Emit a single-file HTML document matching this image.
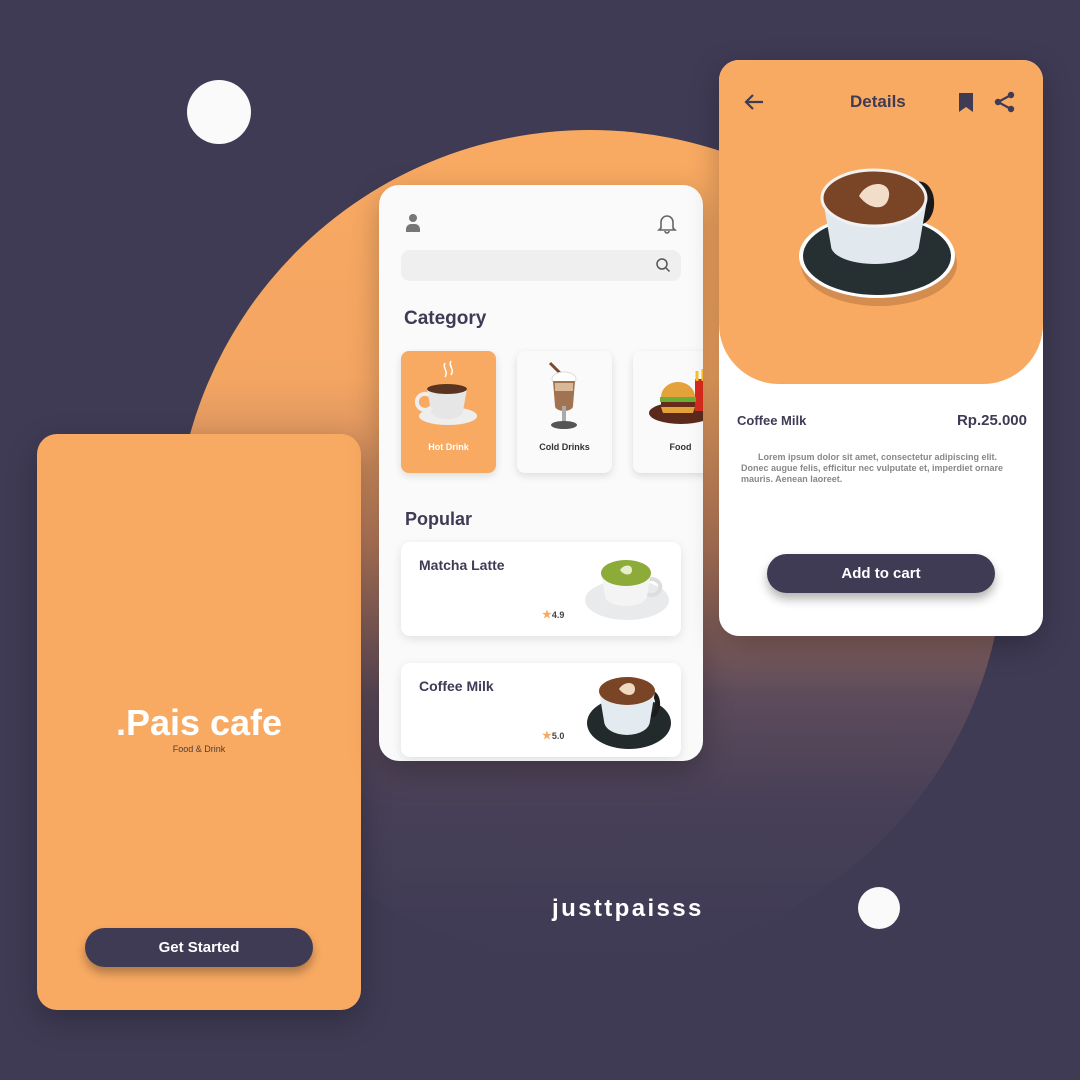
<!DOCTYPE html>
<html><head><meta charset="utf-8"><style>
*{margin:0;padding:0;box-sizing:border-box}
body{width:1080px;height:1080px;background:#3f3b55;position:relative;overflow:hidden;font-family:"Liberation Sans",sans-serif}
.abs{position:absolute}
.circ{left:175px;top:130px;width:830px;height:830px;border-radius:50%;background:linear-gradient(180deg,#f9aa62 0%,#f3a562 30%,#b67a5c 50%,#5d4b5b 68%,#463f57 82%,rgba(63,59,85,0) 100%)}
.card{border-radius:20px;box-shadow:0 10px 30px rgba(0,0,0,.25)}
.dark{color:#3f3b55}
.btn{background:#3f3b55;color:#fff;border-radius:20px;text-align:center;font-weight:bold;box-shadow:0 6px 10px rgba(0,0,0,.3)}
.cat{width:95px;height:122px;border-radius:8px;box-shadow:0 3px 8px rgba(0,0,0,.12);background:#fafafa;font-size:9px;font-weight:bold;text-align:center}
.pop{left:22px;width:280px;height:94px;background:#fff;border-radius:9px;box-shadow:0 3px 10px rgba(0,0,0,.1)}
</style></head><body>
<div class="abs circ"></div>
<div class="abs" style="left:187px;top:80px;width:64px;height:64px;border-radius:50%;background:#fafafa"></div>
<div class="abs" style="left:858px;top:887px;width:42px;height:42px;border-radius:50%;background:#fafafa"></div>
<div class="abs" style="left:552px;top:895px;color:#fff;font-weight:bold;font-size:24px;letter-spacing:2.4px">justtpaisss</div>

<!-- splash -->
<div class="abs card" style="left:37px;top:434px;width:324px;height:576px;background:#f9aa62">
 <div class="abs" style="left:0;width:324px;top:268px;text-align:center;color:#fff;font-weight:bold;font-size:36px">.Pais cafe</div>
 <div class="abs" style="left:0;width:324px;top:310px;text-align:center;color:#4a3d3a;font-size:9px">Food &amp; Drink</div>
 <div class="abs btn" style="left:48px;top:494px;width:228px;height:39px;line-height:39px;font-size:15px">Get Started</div>
</div>

<!-- home -->
<div class="abs card" style="left:379px;top:185px;width:324px;height:576px;background:#fafafa;overflow:hidden">
 <svg class="abs" style="left:25px;top:28px" width="18" height="20" viewBox="0 0 18 20"><circle cx="9" cy="5" r="4" fill="#777"/><path d="M2 19v-3a5 5 0 0 1 5-5h4a5 5 0 0 1 5 5v3z" fill="#777"/></svg>
 <svg class="abs" style="left:277px;top:27px" width="22" height="22" viewBox="0 0 22 22" fill="none" stroke="#666" stroke-width="1.6"><path d="M5 16V10a6 6 0 0 1 12 0v6l2 2H3z"/><path d="M9 19a2 2 0 0 0 4 0"/></svg>
 <div class="abs" style="left:22px;top:65px;width:280px;height:31px;background:#efefef;border-radius:9px"></div>
 <svg class="abs" style="left:276px;top:72px" width="16" height="16" viewBox="0 0 16 16" fill="none" stroke="#555" stroke-width="1.5"><circle cx="7" cy="7" r="5"/><path d="M11 11l3.5 3.5"/></svg>
 <div class="abs dark" style="left:25px;top:123px;font-size:19px;font-weight:bold">Category</div>
 <div class="abs cat" style="left:22px;top:166px;background:#f9aa62;color:#fff">
  <svg width="95" height="85" viewBox="0 0 95 85"><path d="M44 12c-3 5 4 8 0 14M50 10c-3 5 4 8 0 14" stroke="#fff" fill="none" stroke-width="1.5"/><ellipse cx="47" cy="65" rx="29" ry="9" fill="#eee"/><path d="M26 38h40l-4 22a16 8 0 0 1-32 0z" fill="#e6e6e6"/><ellipse cx="46" cy="38" rx="20" ry="5" fill="#5a3420"/><path d="M28 44a8 8 0 1 0 2 12" stroke="#eee" stroke-width="4" fill="none"/></svg>
  <div style="margin-top:4px">Hot Drink</div></div>
 <div class="abs cat" style="left:138px;top:166px;color:#333">
  <svg width="95" height="85" viewBox="0 0 95 85"><path d="M33 12l10 10" stroke="#7a4a2a" stroke-width="3"/><ellipse cx="47" cy="28" rx="12" ry="7" fill="#fff" stroke="#ddd"/><path d="M36 30h22l-2 25a9 5 0 0 1-18 0z" fill="#a27350"/><path d="M38 32h18v8H38z" fill="#d8b896"/><rect x="45" y="55" width="4" height="17" fill="#aaa"/><ellipse cx="47" cy="74" rx="13" ry="4" fill="#555"/></svg>
  <div style="margin-top:4px">Cold Drinks</div></div>
 <div class="abs cat" style="left:254px;top:166px;color:#333">
  <svg width="95" height="85" viewBox="0 0 95 85"><ellipse cx="48" cy="62" rx="32" ry="11" fill="#5b2a1c"/><rect x="62" y="28" width="22" height="32" fill="#d82a1e"/><path d="M64 20v10M70 18v12M76 21v9" stroke="#f7c22a" stroke-width="3"/><path d="M28 46a17 15 0 0 1 34 0z" fill="#e4a23a"/><rect x="27" y="46" width="36" height="5" fill="#6cad3a"/><rect x="28" y="51" width="34" height="5" fill="#6a2c1a"/><path d="M28 56h34l-2 6H30z" fill="#e4a23a"/></svg>
  <div style="margin-top:4px">Food</div></div>
 <div class="abs dark" style="left:26px;top:324px;font-size:18px;font-weight:bold">Popular</div>
 <div class="abs pop" style="top:357px">
  <div class="abs dark" style="left:18px;top:15px;font-size:14px;font-weight:bold">Matcha Latte</div>
  <div class="abs" style="left:141px;top:66px;font-size:9px;color:#444;font-weight:bold"><span style="color:#f9aa62;font-size:11px">★</span>4.9</div>
  <svg class="abs" style="left:184px;top:8px" width="90" height="78" viewBox="0 0 90 78"><ellipse cx="42" cy="50" rx="42" ry="20" fill="#e8eaec"/><path d="M62 30a9 8 0 1 1 0 14" stroke="#ddd" stroke-width="4" fill="none"/><path d="M16 22h50l-4 24a21 10 0 0 1-42 0z" fill="#f4f4f4"/><ellipse cx="41" cy="23" rx="25" ry="13" fill="#8cab38"/><path d="M35 20c4-6 12-6 12 0s-8 6-12 0" fill="#e9eccf"/></svg>
 </div>
 <div class="abs pop" style="top:478px">
  <div class="abs dark" style="left:18px;top:15px;font-size:14px;font-weight:bold">Coffee Milk</div>
  <div class="abs" style="left:141px;top:66px;font-size:9px;color:#444;font-weight:bold"><span style="color:#f9aa62;font-size:11px">★</span>5.0</div>
  <svg class="abs" style="left:184px;top:8px" width="90" height="80" viewBox="0 0 90 80"><ellipse cx="44" cy="52" rx="42" ry="26" fill="#222a2c"/><path d="M66 22a6 10 0 1 1 0 22" stroke="#1c1c1c" stroke-width="5" fill="none"/><path d="M14 20h56l-5 30a23 14 0 0 1-46 0z" fill="#e4ebf0"/><ellipse cx="42" cy="20" rx="28" ry="14" fill="#7a4526"/><path d="M34 18c5-8 16-8 16 0s-10 8-16 0" fill="#efd9c0"/></svg>
 </div>
</div>

<!-- details -->
<div class="abs card" style="left:719px;top:60px;width:324px;height:576px;background:#fff;overflow:hidden">
 <div class="abs" style="left:0;top:0;width:324px;height:324px;background:#f9aa62;border-radius:0 0 60px 60px"></div>
 <svg class="abs" style="left:24px;top:33px" width="22" height="18" viewBox="0 0 22 18" fill="none" stroke="#3f3b55" stroke-width="2.2"><path d="M20 9H3M10 2L3 9l7 7"/></svg>
 <div class="abs dark" style="left:131px;top:32px;font-size:17px;font-weight:bold">Details</div>
 <svg class="abs" style="left:239px;top:32px" width="16" height="21" viewBox="0 0 16 21"><path d="M1 1h14v19l-7-5-7 5z" fill="#3f3b55"/></svg>
 <svg class="abs" style="left:275px;top:31px" width="22" height="22" viewBox="0 0 22 22"><g fill="#3f3b55"><circle cx="17" cy="4" r="3.2"/><circle cx="4" cy="11" r="3.2"/><circle cx="17" cy="18" r="3.2"/></g><path d="M17 4L4 11l13 7" stroke="#3f3b55" stroke-width="2.2" fill="none"/></svg>
 <svg class="abs" style="left:78px;top:104px" width="166" height="148" viewBox="0 0 166 148"><ellipse cx="82" cy="100" rx="78" ry="42" fill="#b06e3c" opacity=".5"/><ellipse cx="80" cy="92" rx="78" ry="42" fill="#fff"/><ellipse cx="80" cy="92" rx="74" ry="39" fill="#263033"/><path d="M122 22a10 16 0 1 1 0 34" stroke="#1a1a1a" stroke-width="9" fill="none"/><path d="M26 36h104l-8 46a44 18 0 0 1-88 0z" fill="#e2e9ee"/><ellipse cx="77" cy="34" rx="52" ry="28" fill="#7a4526"/><ellipse cx="77" cy="34" rx="52" ry="28" fill="none" stroke="#f1f1f1" stroke-width="3"/><path d="M62 32c8-16 32-16 30 0s-20 14-30 0" fill="#f2dec8"/></svg>
 <div class="abs dark" style="left:18px;top:353px;font-size:13px;font-weight:bold">Coffee Milk</div>
 <div class="abs dark" style="right:16px;top:352px;font-size:15px;font-weight:bold">Rp.25.000</div>
 <div class="abs" style="left:22px;top:392px;width:278px;font-size:9px;color:#888;font-weight:bold;line-height:11px;text-indent:17px">Lorem ipsum dolor sit amet, consectetur adipiscing elit. Donec augue felis, efficitur nec vulputate et, imperdiet ornare mauris. Aenean laoreet.</div>
 <div class="abs btn" style="left:48px;top:494px;width:228px;height:39px;line-height:39px;font-size:15px">Add to cart</div>
</div>
</body></html>
